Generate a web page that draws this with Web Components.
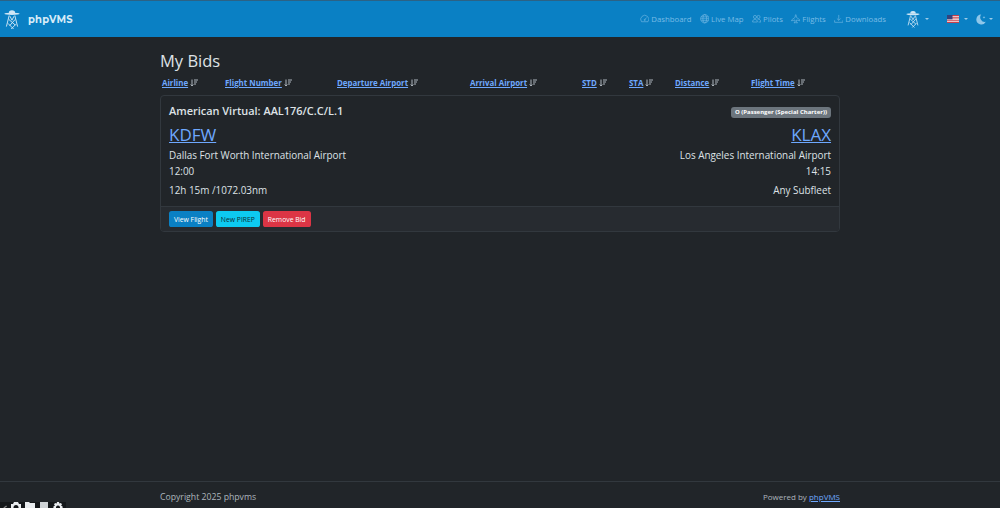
<!DOCTYPE html>
<html lang="en">
<head>
<meta charset="utf-8">
<title>My Bids - phpVMS</title>
<style>
html, body { margin:0; height:100%; }
body {
  background:#212529;
  color:#dee2e6;
  font-family:"Open Sans","Noto Sans","Liberation Sans",sans-serif;
  font-size:10.5px;
  overflow:hidden;
}
</style>
</head>
<body>
<app-page>
  <app-navbar slot="nav">
    <nav-link icon="gauge">Dashboard</nav-link>
    <nav-link icon="globe">Live Map</nav-link>
    <nav-link icon="people">Pilots</nav-link>
    <nav-link icon="plane">Flights</nav-link>
    <nav-link icon="download">Downloads</nav-link>
  </app-navbar>
  <h-title>My Bids</h-title>
  <sort-row>
    <sort-link style="width:63px">Airline</sort-link>
    <sort-link style="width:112px">Flight Number</sort-link>
    <sort-link style="width:133px">Departure Airport</sort-link>
    <sort-link style="width:112px">Arrival Airport</sort-link>
    <sort-link style="width:47px">STD</sort-link>
    <sort-link style="width:46px">STA</sort-link>
    <sort-link style="width:76px">Distance</sort-link>
    <sort-link>Flight Time</sort-link>
  </sort-row>
  <bid-card>
    <span slot="title">American Virtual: AAL176/C.C/L.1</span>
    <span slot="badge">O (Passenger (Special Charter))</span>
    <airport-info slot="dep" code="KDFW" name="Dallas Fort Worth International Airport" time="12:00" extra="12h 15m /1072.03nm"></airport-info>
    <airport-info slot="arr" align="right" code="KLAX" name="Los Angeles International Airport" time="14:15" extra="Any Subfleet"></airport-info>
    <bs-btn slot="actions" kind="primary">View Flight</bs-btn>
    <bs-btn slot="actions" kind="info">New PIREP</bs-btn>
    <bs-btn slot="actions" kind="danger">Remove Bid</bs-btn>
  </bid-card>
  <app-footer slot="footer"></app-footer>
</app-page>
<debug-bar></debug-bar>

<script>
/* logo used in the navbar, twice */
const LOGO = `<svg viewBox="0 0 20 26" fill="none" stroke="#cfe6f5" stroke-width="1.2">
  <ellipse cx="10" cy="6" rx="9.500" ry="1.400" fill="#cfe6f5" stroke="none"/>
  <path d="M6 5 Q6 1.500 10 1.500 Q14 1.500 14 5" fill="#cfe6f5" stroke="none"/>
  <path d="M6.500 8 L3 22 M13.500 8 L17 22"/>
  <path d="M7.500 9 L10 14 L12.500 9 M6 13 L14 20 M14 13 L7 21 M5 18 L12 25 M15 19 L9 25"/>
</svg>`;

const ICONS = {
  gauge: '<path d="M2.500 13a6.800 6.800 0 1 1 11 0z"/><path d="M8 9.500l3-3.500"/><circle cx="8" cy="10" r="1"/>',
  globe: '<circle cx="8" cy="8" r="7"/><ellipse cx="8" cy="8" rx="3.200" ry="7"/><path d="M1 8h14M2 4.800h12M2 11.200h12"/>',
  people: '<circle cx="5" cy="5" r="2.600"/><circle cx="11" cy="5" r="2.600"/><path d="M1 13.500c0-3 1.600-4.500 4-4.500s4 1.500 4 4.500zM9.500 9c3-.6 5.500.9 5.500 4.500h-4"/>',
  plane: '<path d="M8 1c1 1 1 3 1 4.500l6 4.500v1.500L9.300 10 9 13l1.800 1.300v.7L8 14.500 5.200 15v-.7L7 13l-.3-3L1 11.500V10l6-4.500C7 4 7 2 8 1z"/>',
  download: '<path d="M8 1.500v9M4.800 7.500 8 10.700l3.200-3.200M1 10.500v3.500h14v-3.500"/>'
};

class AppPage extends HTMLElement {
  constructor() {
    super();
    this.attachShadow({mode:'open'}).innerHTML = `
    <style>
    :host { display:flex; flex-direction:column; height:100vh; }
    main {
      flex:1;
      box-sizing:border-box;
      width:680px;
      margin:0 auto;
      padding-top:14px;
    }
    </style>
    <slot name="nav"></slot>
    <main><slot></slot></main>
    <slot name="footer"></slot>`;
  }
}

class AppNavbar extends HTMLElement {
  constructor() {
    super();
    this.attachShadow({mode:'open'}).innerHTML = `
    <style>
    :host {
      display:flex;
      align-items:center;
      flex:none;
      background:#0a80c4;
      border-top:1px solid #2c6285;
      box-sizing:border-box;
      height:37px;
      padding:0 7px 0 4px;
      color:#cfe6f5;
    }
    .logo { width:16px; height:21px; display:block; }
    .brand {
      margin-left:8px;
      font:700 10px "Montserrat","Open Sans",sans-serif;
      letter-spacing:.2px;
      color:#d7ebf8;
    }
    .links { margin-left:auto; display:flex; gap:8px; align-items:center; }
    .tool { display:flex; align-items:center; gap:5px; }
    .caret {
      width:0; height:0;
      border:2.300px solid transparent;
      border-top-color:#9ccbe8;
      border-bottom:0;
    }
    .tools { display:flex; align-items:center; margin-left:20px; }
    .flag { width:12px; height:8px; display:block; }
    .moon { width:10px; height:11px; display:block; }
    </style>
    <span class="logo">${LOGO}</span>
    <span class="brand">phpVMS</span>
    <div class="links"><slot></slot></div>
    <div class="tools">
      <span class="tool"><span class="logo" style="width:14px;height:19px">${LOGO}</span><i class="caret"></i></span>
      <span class="tool" style="margin-left:18px">
        <svg class="flag" viewBox="0 0 12 8"><rect width="12" height="8" fill="#f2f2f2"/>
        <path d="M0 .6h12M0 2.900h12M0 5.200h12M0 7.400h12" stroke="#c9404c" stroke-width="1.100"/>
        <rect width="5.500" height="4.300" fill="#34427c"/></svg>
        <i class="caret"></i></span>
      <span class="tool" style="margin-left:8px;gap:3px">
        <svg class="moon" viewBox="0 0 10 11"><path d="M5.200 .5A5 5 0 1 0 9.800 7.800 4.600 4.600 0 0 1 5.200 .5z" fill="#8fc7ea"/><path d="M8 2l.4 1 1 .4-1 .4L8 4.800l-.4-1-1-.4 1-.4z" fill="#8fc7ea"/></svg>
        <i class="caret"></i></span>
    </div>`;
  }
}

class NavLink extends HTMLElement {
  constructor() {
    super();
    const icon = ICONS[this.getAttribute('icon')] || '';
    this.attachShadow({mode:'open'}).innerHTML = `
    <style>
    :host {
      display:inline-flex;
      align-items:center;
      gap:2px;
      color:#79bce6;
      font-size:7.800px;
      white-space:nowrap;
    }
    svg { width:9.500px; height:9.500px; fill:none; stroke:currentColor; stroke-width:1; flex:none; }
    </style>
    <svg viewBox="0 0 16 16">${icon}</svg><slot></slot>`;
  }
}

class HTitle extends HTMLElement {
  constructor() {
    super();
    this.attachShadow({mode:'open'}).innerHTML = `
    <style>
    :host { display:block; font-size:16.500px; font-weight:500; line-height:21px; color:#dee2e6; margin-top:-1px; }
    </style>
    <slot></slot>`;
  }
}

class SortRow extends HTMLElement {
  constructor() {
    super();
    this.attachShadow({mode:'open'}).innerHTML = `
    <style>
    :host { display:flex; height:17px; margin:3px 0 4px; padding:1px 0 0 2px; box-sizing:border-box; }
    </style>
    <slot></slot>`;
  }
}

class SortLink extends HTMLElement {
  constructor() {
    super();
    this.attachShadow({mode:'open'}).innerHTML = `
    <style>
    :host { display:inline-flex; align-items:center; gap:2px; flex:none; white-space:nowrap; line-height:12px; }
    a { color:#6ea8fe; font-size:7.900px; font-weight:700; text-decoration:underline; }
    svg { width:8px; height:8px; fill:none; stroke:#adb5bd; stroke-width:1; }
    </style>
    <a href="#"><slot></slot></a>
    <svg viewBox="0 0 8 8"><path d="M2 .5v6.500M.7 5.500 2 7l1.300-1.500M4 1h4M4 3h3M4 5h2"/></svg>`;
  }
}

class BidCard extends HTMLElement {
  constructor() {
    super();
    this.attachShadow({mode:'open'}).innerHTML = `
    <style>
    :host {
      display:block;
      height:137px;
      box-sizing:border-box;
      border:1px solid #32383e;
      border-radius:4px;
      overflow:hidden;
    }
    .body { height:110px; box-sizing:border-box; padding:7px 8px 0; }
    .head { display:flex; justify-content:space-between; align-items:center; }
    .title { font-size:10.950px; font-weight:600; line-height:16px; color:#dee2e6; }
    .badge {
      background:#6c757d;
      color:#fff;
      border-radius:3px;
      font-size:6px;
      font-weight:700;
      line-height:7px;
      padding:2px 4px;
      margin-top:2px;
    }
    .row { display:flex; justify-content:space-between; margin-top:4px; }
    .foot {
      height:25px;
      box-sizing:border-box;
      border-top:1px solid #32383e;
      padding:4px 8px 0;
      display:flex;
      gap:3px;
      background:#272b30;
    }
    </style>
    <div class="body">
      <div class="head">
        <div class="title"><slot name="title"></slot></div>
        <div class="badge"><slot name="badge"></slot></div>
      </div>
      <div class="row">
        <slot name="dep"></slot>
        <slot name="arr"></slot>
      </div>
    </div>
    <div class="foot"><slot name="actions"></slot></div>`;
  }
}

class AirportInfo extends HTMLElement {
  constructor() {
    super();
    const g = n => this.getAttribute(n);
    this.attachShadow({mode:'open'}).innerHTML = `
    <style>
    :host { display:block; text-align:${g('align') === 'right' ? 'right' : 'left'}; color:#dee2e6; }
    a { display:block; color:#6ea8fe; font-size:17px; font-weight:500; line-height:22px; padding-top:1px; }
    .name { line-height:16px; margin-top:1px; font-size:9.900px; }
    .time { line-height:16px; font-size:9.900px; }
    .extra { line-height:16px; margin-top:3px; font-size:9.900px; }
    </style>
    <a href="#">${g('code')}</a>
    <div class="name">${g('name')}</div>
    <div class="time">${g('time')}</div>
    <div class="extra">${g('extra')}</div>`;
  }
}

class BsBtn extends HTMLElement {
  constructor() {
    super();
    const kind = this.getAttribute('kind');
    const c = { primary:['#0a80c4','#fff'], info:['#0dcaf0','#0b2a33'], danger:['#dc3545','#fff'] }[kind];
    this.attachShadow({mode:'open'}).innerHTML = `
    <style>
    :host {
      display:inline-flex;
      align-items:center;
      justify-content:center;
      height:16px;
      padding:0 5px;
      border-radius:2.600px;
      background:${c[0]};
      color:${c[1]};
      font-size:6.800px;
      white-space:nowrap;
    }
    </style>
    <slot></slot>`;
  }
}

class AppFooter extends HTMLElement {
  constructor() {
    super();
    this.attachShadow({mode:'open'}).innerHTML = `
    <style>
    :host {
      display:block;
      flex:none;
      height:27px;
      border-top:1px solid #32383e;
      box-sizing:border-box;
      color:#adb5bd;
    }
    .in {
      width:680px;
      margin:0 auto;
      padding-top:9px;
      box-sizing:border-box;
      display:flex;
      justify-content:space-between;
      line-height:12px;
      font-size:8.700px;
    }
    .right { font-size:8px; }
    a { color:#6ea8fe; }
    </style>
    <div class="in"><span>Copyright 2025 phpvms</span><span class="right">Powered by <a href="#">phpVMS</a></span></div>`;
  }
}

/* debug toolbar that sticks out at the bottom left corner */
class DebugBar extends HTMLElement {
  constructor() {
    super();
    this.attachShadow({mode:'open'}).innerHTML = `
    <style>
    :host {
      position:fixed;
      left:0;
      bottom:0;
      width:66px;
      height:6px;
      background:#14171a;
      overflow:hidden;
      display:flex;
      gap:4px;
      padding-left:3px;
      box-sizing:border-box;
    }
    svg { width:10px; height:12px; fill:#e9ecef; flex:none; }
    </style>
    <svg viewBox="0 0 10 12" style="width:4px"><path d="M1 5l7-5 2 2-7 5z" fill="#888"/></svg>
    <svg viewBox="0 0 10 12"><path fill-rule="evenodd" d="M3 0h4l1 2h2v10H0V2h2zM5 3a2.500 2.500 0 1 0 .01 0z"/></svg>
    <svg viewBox="0 0 10 12"><path d="M0 0h4l1 1h5v11H0z"/></svg>
    <svg viewBox="0 0 10 12"><path d="M1 0h8v12H1z" fill="#cfd3d6"/></svg>
    <svg viewBox="0 0 10 12"><path fill-rule="evenodd" d="M4 0h2l.4 1.500 1.600-.6 1 1.500-1 1.200 1.600.9v2L8 7.500V12H2V7.500L.4 6.500v-2L2 3.600 1 2.400l1-1.500 1.600.6zM5 3.500a2 2 0 1 0 .01 0z"/></svg>`;
  }
}

customElements.define('app-page', AppPage);
customElements.define('app-navbar', AppNavbar);
customElements.define('nav-link', NavLink);
customElements.define('h-title', HTitle);
customElements.define('sort-row', SortRow);
customElements.define('sort-link', SortLink);
customElements.define('bid-card', BidCard);
customElements.define('airport-info', AirportInfo);
customElements.define('bs-btn', BsBtn);
customElements.define('app-footer', AppFooter);
customElements.define('debug-bar', DebugBar);
</script>
</body>
</html>
